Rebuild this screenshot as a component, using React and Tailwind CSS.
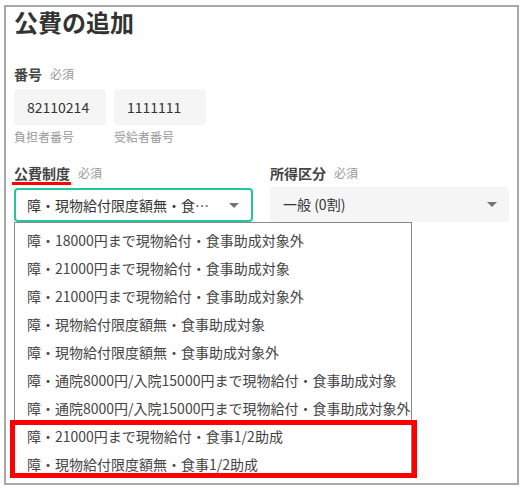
const options = [
  "障・18000円まで現物給付・食事助成対象外",
  "障・21000円まで現物給付・食事助成対象",
  "障・21000円まで現物給付・食事助成対象外",
  "障・現物給付限度額無・食事助成対象",
  "障・現物給付限度額無・食事助成対象外",
  "障・通院8000円/入院15000円まで現物給付・食事助成対象",
  "障・通院8000円/入院15000円まで現物給付・食事助成対象外",
  "障・21000円まで現物給付・食事1/2助成",
  "障・現物給付限度額無・食事1/2助成",
];

function Caret() {
  return (
    <svg width="10" height="5" viewBox="0 0 10 5" className="shrink-0">
      <path d="M0 0h10L5 5z" fill="#757575" />
    </svg>
  );
}

function Label({ children }) {
  return (
    <div className="flex items-center gap-[8px] leading-[20px]">
      <span className="text-[14px] font-bold text-[#444]">{children}</span>
      <span className="text-[12px] text-[#999]">必須</span>
    </div>
  );
}

export default function App() {
  return (
    <div
      className="relative w-[525px] h-[490px] bg-white pt-[5px] pl-[4px]"
      style={{ fontFamily: '"Noto Sans CJK JP", "Noto Sans", sans-serif' }}
    >
      <div className="w-[515px] h-[480px] border-2 border-[#a8a8a8] px-[8px]">
        <h1 className="text-[24px] font-bold leading-[30px] text-[#333]">公費の追加</h1>

        <div className="mt-[27px]">
          <Label>番号</Label>
          <div className="mt-[5px] flex gap-[8px]">
            <div className="w-[92px]">
              <div className="h-[36px] rounded-[4px] bg-[#f5f5f5] px-[13px] flex items-center text-[14px] text-[#333]">
                82110214
              </div>
              <div className="mt-[3px] text-[12px] leading-[18px] text-[#999]">負担者番号</div>
            </div>
            <div className="w-[92px]">
              <div className="h-[36px] rounded-[4px] bg-[#f5f5f5] px-[13px] flex items-center text-[14px] text-[#333]">
                1111111
              </div>
              <div className="mt-[3px] text-[12px] leading-[18px] text-[#999]">受給者番号</div>
            </div>
          </div>
        </div>

        <div className="mt-[17px] grid grid-cols-2 gap-x-[17px]">
          <div>
            <Label>公費制度</Label>
            <div className="mt-[5px] h-[34px] rounded-[4px] border-2 border-[#22c79b] pl-[11px] pr-[12px] flex items-center justify-between text-[14px] text-[#333]">
              <span>障・現物給付限度額無・食…</span>
              <Caret />
            </div>
          </div>
          <div>
            <Label>所得区分</Label>
            <div className="mt-[4px] h-[35px] rounded-[4px] bg-[#f5f5f5] pl-[13px] pr-[12px] flex items-center justify-between text-[14px] text-[#333]">
              <span>一般 (0割)</span>
              <Caret />
            </div>
          </div>
        </div>
      </div>

      {/* 開いたドロップダウン */}
      <div className="absolute left-[14px] top-[222px] w-[398px] h-[256px] overflow-hidden border border-[#8a8a8a] bg-white pt-[3px]">
        {options.map((o) => (
          <div key={o} className="h-[28px] pl-[12px] flex items-center text-[14px] text-[#444] whitespace-nowrap">
            {o}
          </div>
        ))}
      </div>

      {/* 注釈 */}
      <div className="absolute left-[12px] top-[182px] w-[59px] h-[3px] bg-[#ff0000]" />
      <div className="absolute left-[10px] top-[420px] w-[407px] h-[58px] border-[5px] border-[#ff0000]" />
    </div>
  );
}
